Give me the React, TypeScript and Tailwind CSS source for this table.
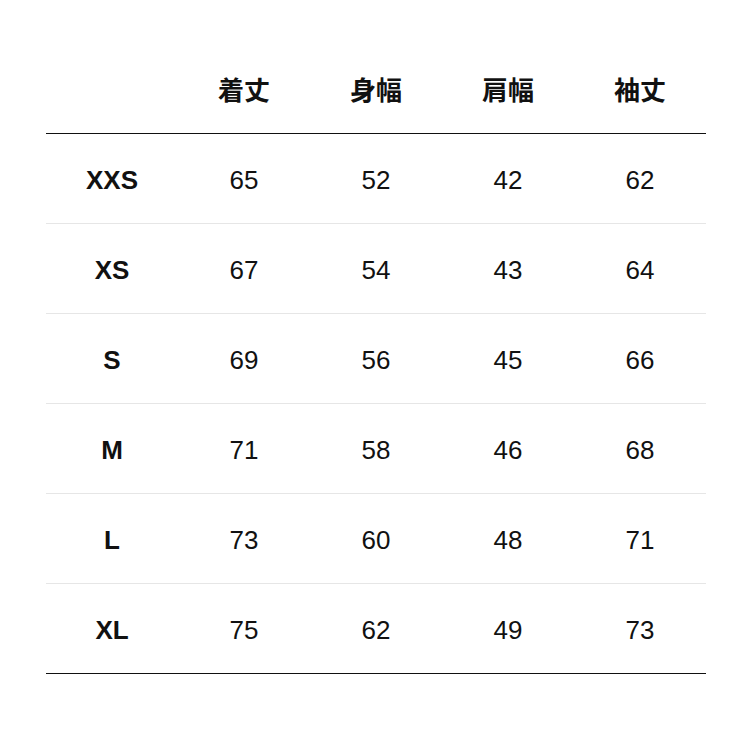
const headers = ["着丈", "身幅", "肩幅", "袖丈"];

const rows: [string, number[]][] = [
  ["XXS", [65, 52, 42, 62]],
  ["XS", [67, 54, 43, 64]],
  ["S", [69, 56, 45, 66]],
  ["M", [71, 58, 46, 68]],
  ["L", [73, 60, 48, 71]],
  ["XL", [75, 62, 49, 73]],
];

export default function App() {
  return (
    <div
      className="w-[750px] h-[750px] bg-white text-[#111] pt-[44px] pl-[46px]"
      style={{ fontFamily: '"Liberation Sans", "Noto Sans CJK JP", Arial, sans-serif' }}
    >
      <div className="w-[660px]">
        {/* header */}
        <div className="grid grid-cols-5 h-[90px] items-center border-b border-[#111]">
          <div />
          {headers.map((h) => (
            <div key={h} className="text-center text-[26px] font-bold pt-[5px]">
              {h}
            </div>
          ))}
        </div>

        {/* body */}
        {rows.map(([size, vals], i) => (
          <div
            key={size}
            className={`grid grid-cols-5 h-[90px] items-center border-b ${
              i === rows.length - 1 ? "border-[#111]" : "border-[#e6e6e6]"
            }`}
          >
            <div className="text-center text-[26px] font-bold pt-[4px]">{size}</div>
            {vals.map((v, j) => (
              <div key={j} className="text-center text-[26px] pt-[4px]">
                {v}
              </div>
            ))}
          </div>
        ))}
      </div>
    </div>
  );
}
